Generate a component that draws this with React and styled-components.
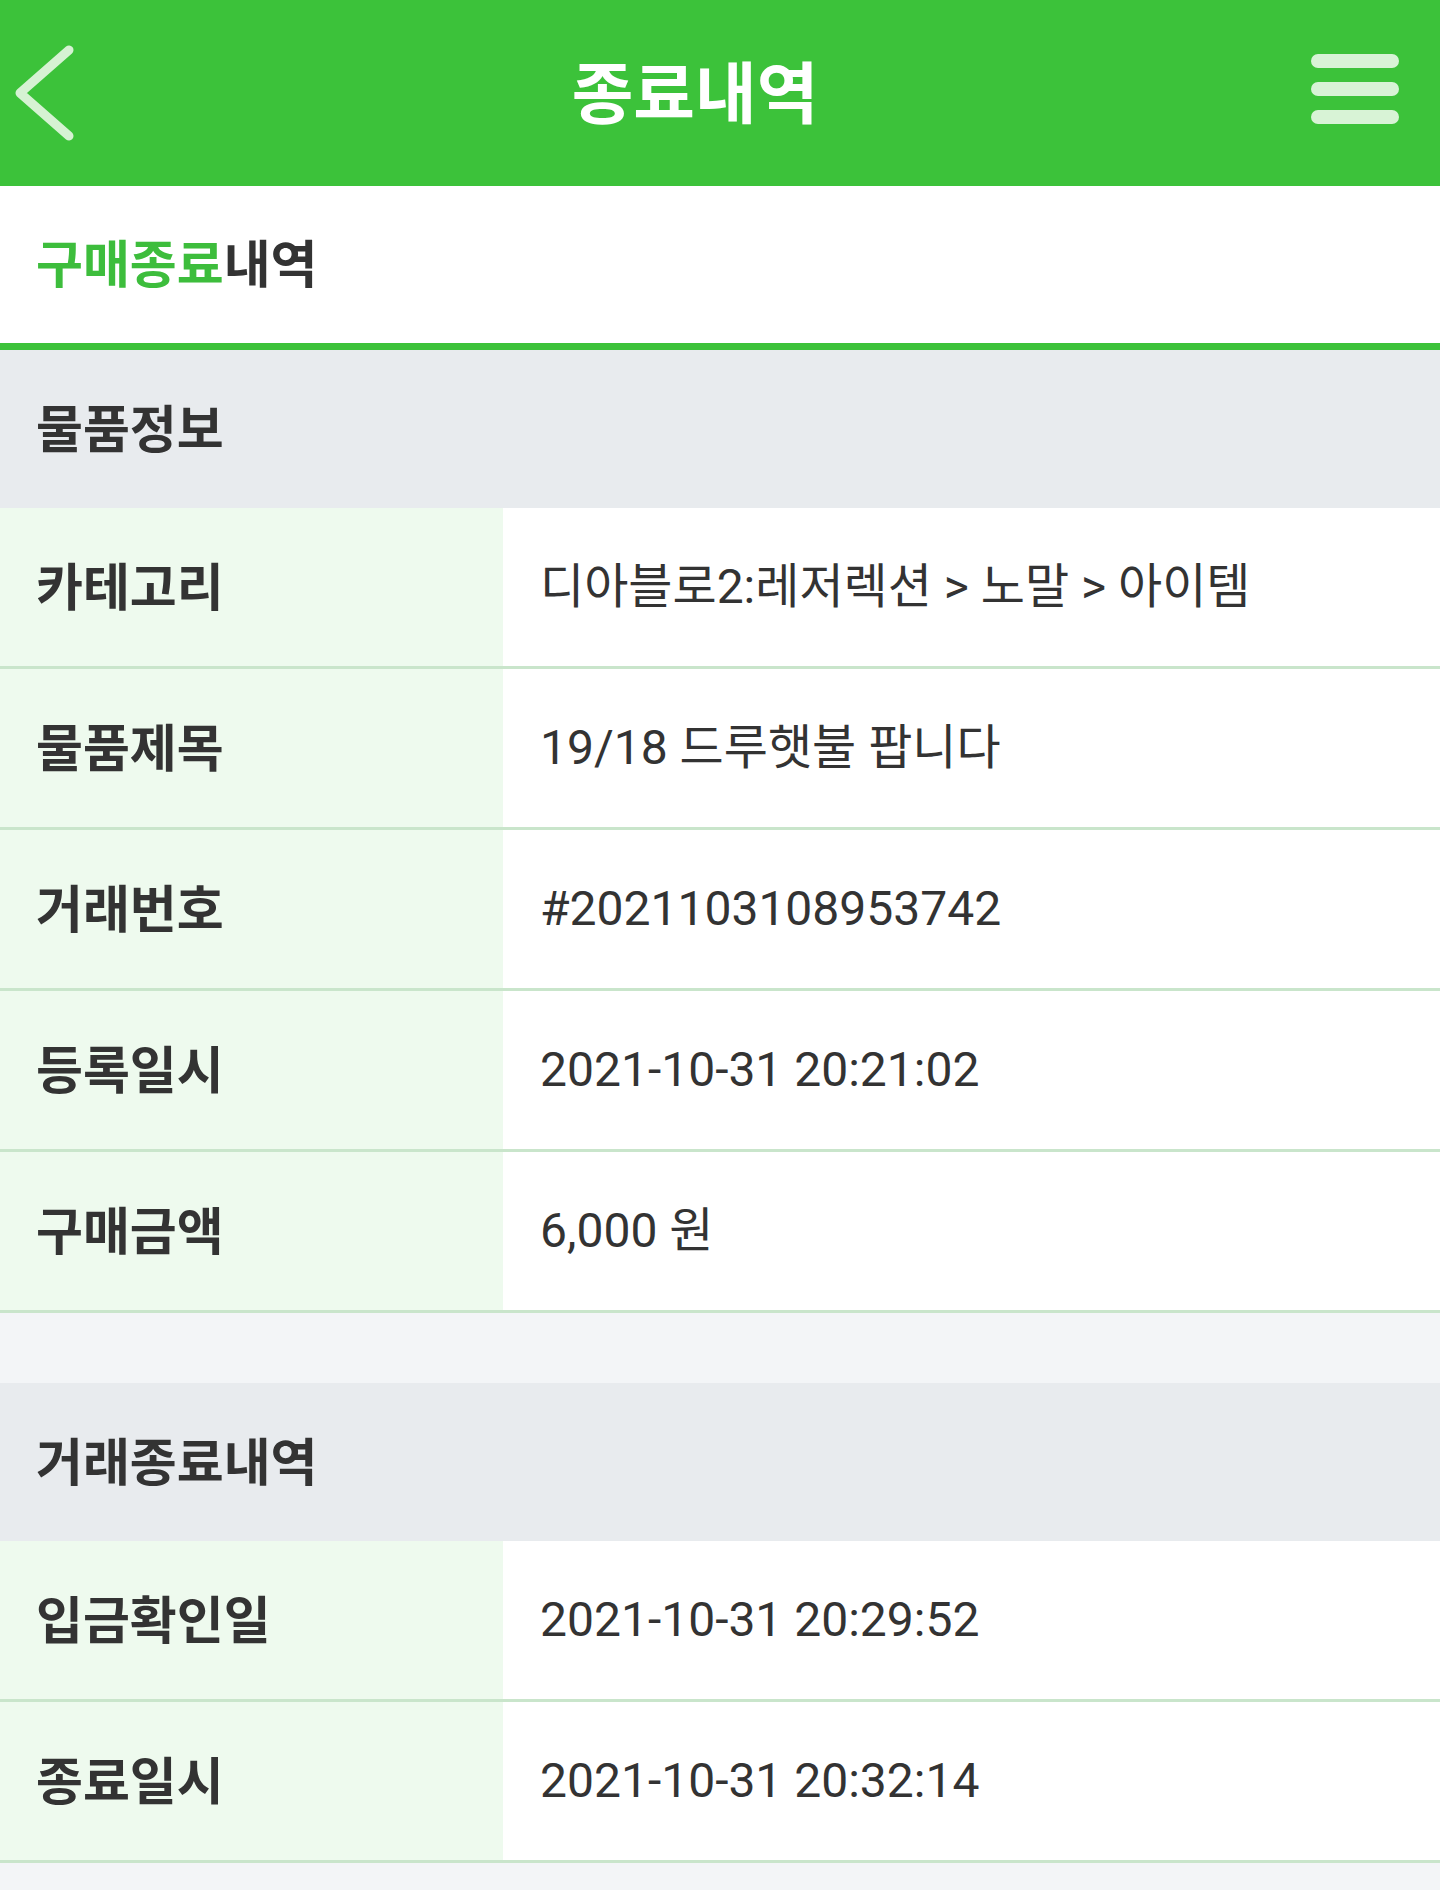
import React from "react";
import styled, { createGlobalStyle } from "styled-components";

const Global = createGlobalStyle`
  html, body { margin: 0; padding: 0; background: #f3f5f7; }
  body { font-family: Roboto, "Noto Sans CJK KR", "Noto Sans", sans-serif; color: #333; }
  * { box-sizing: border-box; }
`;

const Page = styled.div`
  width: 1440px;
  min-height: 1890px;
  background: #f3f5f7;
  display: flex;
  flex-direction: column;
`;

const TopBar = styled.header`
  height: 186px;
  background: #3cc23a;
  display: flex;
  align-items: center;
`;

const BackButton = styled.button`
  width: 100px;
  height: 100%;
  border: 0;
  background: none;
  padding: 0 0 0 15px;
  display: flex;
  align-items: center;
  cursor: pointer;
`;

const Title = styled.h1`
  flex: 1;
  margin: 0;
  text-align: center;
  color: #fff;
  font-size: 67px;
  font-weight: 700;
  font-family: "Noto Sans CJK KR", sans-serif;
  line-height: 1;
  padding-bottom: 10px;
`;

const MenuButton = styled.button`
  width: 150px;
  height: 100%;
  border: 0;
  background: none;
  padding: 0 41px 8px 0;
  display: flex;
  flex-direction: column;
  align-items: flex-end;
  justify-content: center;
  gap: 14px;
  cursor: pointer;
`;

const MenuBar = styled.span`
  display: block;
  width: 88px;
  height: 14px;
  border-radius: 7px;
  background: #d8f3d6;
`;

const boldText = `
  font-family: "Noto Sans CJK KR", sans-serif;
  font-weight: 700;
  font-size: 51px;
  color: #333;
  line-height: 1;
`;

const SubHeader = styled.div`
  height: 164px;
  background: #fff;
  border-bottom: 7px solid #3cc23a;
  display: flex;
  align-items: center;
  padding: 0 0 6px 36px;
  ${boldText}
`;

const Accent = styled.span`
  color: #3dbd3c;
`;

const SectionHeader = styled.div`
  height: 158px;
  background: #e8ebee;
  display: flex;
  align-items: center;
  padding: 0 0 6px 36px;
  ${boldText}
`;

const Row = styled.div`
  display: grid;
  grid-template-columns: 503px 1fr;
  height: 161px;
  border-bottom: 3px solid #c9e5cb;
`;

const Label = styled.div`
  background: #eefaee;
  display: flex;
  align-items: center;
  padding: 0 0 6px 36px;
  ${boldText}
`;

const Value = styled.div`
  background: #fff;
  display: flex;
  align-items: center;
  padding: 0 0 1px 37px;
  font-size: 48px;
  font-weight: 400;
  color: #333;
  line-height: 1;
`;

const Gap = styled.div`
  height: 70px;
`;

const BackIcon = () => (
  <svg width="62" height="100" viewBox="0 0 62 100" aria-hidden="true">
    <polyline
      points="54,7 5,50 54,93"
      fill="none"
      stroke="#d6f2d3"
      strokeWidth="9"
      strokeLinecap="round"
      strokeLinejoin="round"
    />
  </svg>
);

const info = [
  ["카테고리", "디아블로2:레저렉션 > 노말 > 아이템"],
  ["물품제목", "19/18 드루햇불 팝니다"],
  ["거래번호", "#2021103108953742"],
  ["등록일시", "2021-10-31 20:21:02"],
  ["구매금액", "6,000 원"],
];

const done = [
  ["입금확인일", "2021-10-31 20:29:52"],
  ["종료일시", "2021-10-31 20:32:14"],
];

export default function App() {
  return (
    <>
      <Global />
      <Page>
        <TopBar>
          <BackButton aria-label="뒤로">
            <BackIcon />
          </BackButton>
          <Title>종료내역</Title>
          <MenuButton aria-label="메뉴">
            <MenuBar />
            <MenuBar />
            <MenuBar />
          </MenuButton>
        </TopBar>
        <SubHeader>
          <Accent>구매종료</Accent>내역
        </SubHeader>
        <SectionHeader>물품정보</SectionHeader>
        {info.map(([k, v]) => (
          <Row key={k}>
            <Label>{k}</Label>
            <Value>{v}</Value>
          </Row>
        ))}
        <Gap />
        <SectionHeader>거래종료내역</SectionHeader>
        {done.map(([k, v]) => (
          <Row key={k}>
            <Label>{k}</Label>
            <Value>{v}</Value>
          </Row>
        ))}
      </Page>
    </>
  );
}
